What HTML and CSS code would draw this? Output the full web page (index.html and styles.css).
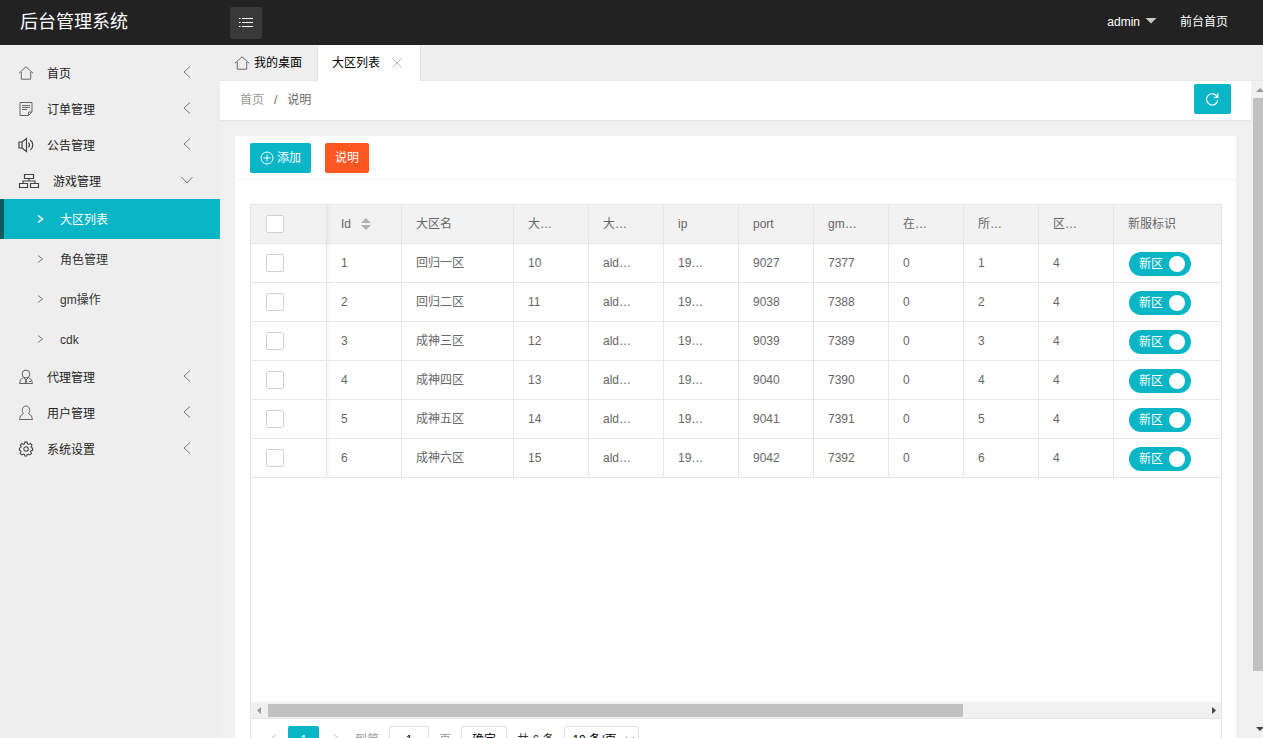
FILE: index.html
```html
<!DOCTYPE html>
<html lang="zh-CN">
<head>
<meta charset="utf-8">
<title>后台管理系统</title>
<link rel="stylesheet" href="styles.css">
</head>
<body>
<svg class="defs" width="0" height="0" aria-hidden="true">
  <symbol id="home" viewBox="0 0 16 16"><path d="M1 8.200 8 1.800l7 6.400M3.300 7v7.200h9.400V7"/></symbol>
  <symbol id="left" viewBox="0 0 16 16"><path d="M11 2.500 5 8l6 5.500"/></symbol>
  <symbol id="right" viewBox="0 0 16 16"><path d="m6 4.500 4.500 3.500L6 11.500"/></symbol>
  <symbol id="down" viewBox="0 0 16 16"><path d="M2.500 5 8 11l5.500-6"/></symbol>
</svg>
<header class="header">
  <div class="logo">后台管理系统</div>
  <button class="toggle" type="button" aria-label="菜单">
    <svg width="16" height="12" viewBox="0 0 16 12"><path d="M4 1.500h11M4 5.500h11M4 9.500h11M1 1.500h1.500M1 5.500h1.500M1 9.500h1.500"/></svg>
  </button>
  <nav class="account">
    <a href="#">admin<i class="caret"></i></a>
    <a href="#">前台首页</a>
  </nav>
</header>
<div class="layout">
  <nav class="side">
    <a class="item" href="#"><svg class="ico"><use href="#home"/></svg><span>首页</span><svg class="arrow"><use href="#left"/></svg></a>
    <a class="item" href="#"><svg class="ico" viewBox="0 0 16 16"><path d="M2 1.500h12v9.500l-3.500 3.500H2zM14 11h-3.500v3.500M4 4.500h8M4 6.500h8M4 8.500h5"/></svg><span>订单管理</span><svg class="arrow"><use href="#left"/></svg></a>
    <a class="item" href="#"><svg class="ico strong" viewBox="0 0 16 16"><path d="M1 5h3v6H1zM4 5l4.500-3.500v13L4 11M10.500 5.500q2 2.500 0 5M12.200 3c3.500 2.500 3.500 7.500 0 10"/></svg><span>公告管理</span><svg class="arrow"><use href="#left"/></svg></a>
    <a class="item" href="#"><svg class="ico wide strong" viewBox="0 0 22 16"><path d="M6.500 1.500h9v4h-9zM1.500 10.500h8v4h-8zM12.500 10.500h8v4h-8zM11 5.500V8M5 10.500V8h12v2.500"/></svg><span>游戏管理</span><svg class="arrow"><use href="#down"/></svg></a>
    <a class="sub active" href="#"><svg class="chev"><use href="#right"/></svg><span>大区列表</span></a>
    <a class="sub" href="#"><svg class="chev"><use href="#right"/></svg><span>角色管理</span></a>
    <a class="sub" href="#"><svg class="chev"><use href="#right"/></svg><span>gm操作</span></a>
    <a class="sub" href="#"><svg class="chev"><use href="#right"/></svg><span>cdk</span></a>
    <a class="item" href="#"><svg class="ico" viewBox="0 0 16 16"><ellipse cx="8" cy="5" rx="3.800" ry="4"/><path d="M5.500 8.500Q1.500 10 1.500 14.500h13Q14.500 10 10.500 8.500M6 9l2 2 2-2M8 11l-1 3.500M8 11l1 3.500M11 12.500h2"/></svg><span>代理管理</span><svg class="arrow"><use href="#left"/></svg></a>
    <a class="item" href="#"><svg class="ico" viewBox="0 0 16 16"><path d="M5.500 8.500C3.500 7 3.800 1 8 1s4.500 6 2.500 7.500Q14.500 10 14.500 14.500h-13Q1.500 10 5.500 8.500"/></svg><span>用户管理</span><svg class="arrow"><use href="#left"/></svg></a>
    <a class="item" href="#"><svg class="ico strong" viewBox="-1 -.5 18 18"><path d="m6.700.8h2.600l.5 2 1.300.6 1.900-1.200 1.800 1.900-1.200 1.800.5 1.200 1.400.3v2.600l-1.700.4-.6 1.300 1 1.700-1.800 1.800-1.800-1-1.300.6-.5 1.500H6.700l-.5-1.700-1.200-.5-1.800 1-1.800-1.800 1-1.800-.6-1.200L.6 10V7.400L2 7l.6-1.300L1.600 4l1.800-1.800 1.700 1.100 1.200-.5z"/><circle cx="8" cy="8.500" r="2.500"/></svg><span>系统设置</span><svg class="arrow"><use href="#left"/></svg></a>
  </nav>
  <main class="main">
    <div class="tabs">
      <a class="tab" href="#"><svg class="ico"><use href="#home"/></svg>我的桌面</a>
      <a class="tab current" href="#">大区列表<svg class="close" viewBox="0 0 10 10"><path d="m.7.7 8.600 8.600M9.300.7.7 9.300"/></svg></a>
    </div>
    <div class="frame">
      <div class="page">
        <div class="crumbs">
          <a href="#">首页</a><span class="slash">/</span><span>说明</span>
          <button class="btn refresh" type="button" aria-label="刷新"><svg width="15" height="14" viewBox="0 0 15 14"><path d="M12.300 5A5.600 5.600 0 1 0 12.800 7.800M12.800 1.300v4H9"/></svg></button>
        </div>
        <section class="card">
          <div class="tools">
            <button class="btn" type="button"><svg width="14" height="14" viewBox="0 0 14 14"><circle cx="7" cy="7" r="6"/><path d="M7 3.500v7M3.500 7h7"/></svg>添加</button>
            <button class="btn warm" type="button">说明</button>
          </div>
          <div class="grid">
            <div class="view">
              <table>
                <colgroup><col class="c-check"><col class="c-std"><col class="c-name"><col class="c-std"><col class="c-std"><col class="c-std"><col class="c-std"><col class="c-std"><col class="c-std"><col class="c-std"><col class="c-std"><col></colgroup>
                <thead><tr><th><input class="check" type="checkbox" aria-label="全选"></th><th><span class="sort">Id<svg width="10" height="12" viewBox="0 0 10 12"><path d="M0 5 5 0l5 5zM0 7l5 5 5-5z"/></svg></span></th><th>大区名</th><th>大…</th><th>大…</th><th>ip</th><th>port</th><th>gm…</th><th>在…</th><th>所…</th><th>区…</th><th>新服标识</th></tr></thead>
                <tbody>
                  <tr><td><input class="check" type="checkbox" aria-label="选择 1"></td><td>1</td><td>回归一区</td><td>10</td><td>ald…</td><td>19…</td><td>9027</td><td>7377</td><td>0</td><td>1</td><td>4</td><td><label class="switch">新区<input type="checkbox" checked></label></td></tr>
                  <tr><td><input class="check" type="checkbox" aria-label="选择 2"></td><td>2</td><td>回归二区</td><td>11</td><td>ald…</td><td>19…</td><td>9038</td><td>7388</td><td>0</td><td>2</td><td>4</td><td><label class="switch">新区<input type="checkbox" checked></label></td></tr>
                  <tr><td><input class="check" type="checkbox" aria-label="选择 3"></td><td>3</td><td>成神三区</td><td>12</td><td>ald…</td><td>19…</td><td>9039</td><td>7389</td><td>0</td><td>3</td><td>4</td><td><label class="switch">新区<input type="checkbox" checked></label></td></tr>
                  <tr><td><input class="check" type="checkbox" aria-label="选择 4"></td><td>4</td><td>成神四区</td><td>13</td><td>ald…</td><td>19…</td><td>9040</td><td>7390</td><td>0</td><td>4</td><td>4</td><td><label class="switch">新区<input type="checkbox" checked></label></td></tr>
                  <tr><td><input class="check" type="checkbox" aria-label="选择 5"></td><td>5</td><td>成神五区</td><td>14</td><td>ald…</td><td>19…</td><td>9041</td><td>7391</td><td>0</td><td>5</td><td>4</td><td><label class="switch">新区<input type="checkbox" checked></label></td></tr>
                  <tr><td><input class="check" type="checkbox" aria-label="选择 6"></td><td>6</td><td>成神六区</td><td>15</td><td>ald…</td><td>19…</td><td>9042</td><td>7392</td><td>0</td><td>6</td><td>4</td><td><label class="switch">新区<input type="checkbox" checked></label></td></tr>
                </tbody>
              </table>
            </div>
            <div class="hbar"><svg class="dim" viewBox="0 0 17 17"><path d="M10 5v7L6 8.500z"/></svg><div class="htrack"><div class="hthumb"></div></div><svg viewBox="0 0 17 17"><path d="M8 5v7l4-3.500z"/></svg></div>
            <div class="pager">
              <a class="step" href="#" aria-label="上一页"><svg><use href="#left"/></svg></a>
              <a class="num" href="#">1</a>
              <a class="step next" href="#" aria-label="下一页"><svg viewBox="0 0 16 16"><path d="m5 2.500 6 5.500-6 5.500"/></svg></a>
              <label class="jump">到第<input type="text" value="1">页</label>
              <button class="ok" type="button">确定</button>
              <span class="total">共 6 条</span>
              <select aria-label="每页条数"><option>10 条/页</option></select>
            </div>
          </div>
        </section>
      </div>
      <div class="vbar"><svg class="dim" viewBox="0 0 12 17"><path d="M5 11h8L9 7z"/></svg><div class="vtrack"><div class="vthumb"></div></div><svg viewBox="0 0 12 17"><path d="M5 6h8l-4 4z"/></svg></div>
    </div>
  </main>
</div>
</body>
</html>
```
FILE: styles.css
```css
* { box-sizing: border-box; }
body {
  margin: 0;
  height: 100vh;
  display: flex;
  flex-direction: column;
  overflow: hidden;
  background: #f0f0f0;
  color: #666;
  font: 12px/20px "Liberation Sans", "Noto Sans CJK SC", sans-serif;
}
a { color: inherit; text-decoration: none; }
button, input, select { font: inherit; margin: 0; }
svg { fill: none; stroke: currentColor; flex: none; }
.defs { position: absolute; }

.header { display: flex; align-items: center; height: 45px; flex: none; background: #222; color: #fff; }
.logo { width: 230px; padding-left: 20px; font-size: 18px; line-height: 44px; height: 45px; }
.toggle { display: grid; place-items: center; width: 32px; height: 32px; padding: 0; border: 0; border-radius: 2px; background: #393939; color: #fff; }
.account { display: flex; gap: 23px; margin-left: auto; padding: 0 35px 2px 0; }
.account a { display: flex; gap: 5px; }
.caret { margin-top: 6px; width: 12px; height: 6px; background: #c8c8c8; clip-path: polygon(0 0, 100% 0, 50% 100%); }

.layout { display: flex; flex: 1; min-height: 0; }
.side { width: 220px; flex: none; padding-top: 10px; background: #eee; color: #222; }
.item { display: flex; align-items: center; height: 36px; padding: 0 25px 0 18px; gap: 13px; }
.side span { padding-top: 2px; }
.ico { width: 16px; height: 16px; color: #666; }
.ico.wide { width: 22px; }
.ico.strong { color: #444; stroke-width: 1.2; }
.arrow { width: 16px; height: 16px; margin: 0 0 2px auto; color: #777; }
.sub { display: flex; align-items: center; height: 40px; padding-left: 28px; gap: 12px; border-left: 4px solid transparent; color: #333; }
.chev { width: 16px; height: 16px; color: #777; }
.sub.active { background: #0ab5c6; border-color: #0b5c5c; color: #fff; }
.sub.active .chev { color: #fff; stroke-width: 1.5; }

.main { display: flex; flex-direction: column; flex: 1; min-width: 0; }
.tabs { display: flex; height: 36px; flex: none; background: #eee; border-bottom: 1px solid #e6e6e6; color: #000; }
.tab { display: flex; align-items: center; gap: 4px; height: 36px; padding: 0 15px 1px 14px; border-right: 1px solid #e2e2e2; }
.tab.current { background: #fff; padding-right: 18px; gap: 12px; }
.close { width: 10px; height: 10px; color: #bbb; }

.frame { display: flex; flex: 1; min-height: 0; }
.page { flex: 1; min-width: 0; overflow: hidden; }
.crumbs { display: flex; align-items: center; height: 40px; padding: 0 20px 3px; background: #fff; border-bottom: 1px solid #e5e5e5; }
.crumbs a, .crumbs span { padding-top: 2px; }
.crumbs a { color: #999; }
.crumbs .slash { padding: 2px 10px 0; }
.btn { display: flex; align-items: center; gap: 3px; height: 30px; padding: 0 10px; border: 0; border-radius: 2px; background: #0ab5c6; color: #fff; }
.btn.warm { background: #ff5722; }
.btn.refresh { margin-left: auto; padding: 0 11px; }
.refresh svg { stroke-width: 1.2; }
.card { margin: 15px 15px 0; background: #fff; }
.tools { display: flex; gap: 14px; padding: 7px 15px 6px; border-bottom: 1px solid #f6f6f6; }
.grid { margin: 24px 14px 0 15px; border: 1px solid #e6e6e6; }
.view { height: calc(100vh - 241px); min-height: 280px; overflow: hidden; }

table { width: 100%; table-layout: fixed; border-collapse: separate; border-spacing: 0; }
.c-check { width: 76px; }
.c-std { width: 75px; }
.c-name { width: 112px; }
th, td { height: 39px; padding: 0 0 0 14px; border: solid #e6e6e6; border-width: 0 1px 1px 0; text-align: left; font-weight: 400; white-space: nowrap; }
th { background: #f2f2f2; }
th:last-child, td:last-child { border-right: 0; }
th:first-child, td:first-child, td:last-child { padding-left: 15px; }
th:nth-child(2), td:nth-child(2) { box-shadow: inset 6px 0 6px -6px rgba(0, 0, 0, .08); }
.check { display: block; appearance: none; width: 18px; height: 18px; border: 1px solid #d2d2d2; border-radius: 2px; background: #fff; }
.sort { display: flex; align-items: center; gap: 10px; }
.sort svg { fill: #b2b2b2; stroke: none; }
.switch { display: flex; align-items: center; justify-content: space-between; width: 62px; height: 24px; margin-top: 2px; padding: 0 6px 0 10px; border-radius: 12px; background: #0ab5c6; color: #fff; }
.switch input { appearance: none; width: 16px; height: 16px; border-radius: 50%; background: #fff; }

.hbar { display: flex; height: 17px; background: #f0f0f0; border-bottom: 1px solid #e6e6e6; }
.hbar svg { width: 17px; height: 17px; }
.hbar svg, .vbar svg { fill: #444; stroke: none; }
.hbar .dim, .vbar .dim { fill: #999; }
.htrack { flex: 1; padding: 2px 0 1px; }
.hthumb { width: 74.3%; height: 13px; background: #c1c1c1; }
.vbar { display: flex; flex-direction: column; width: 12px; background: #f0f0f0; }
.vbar svg { width: 12px; height: 17px; }
.vtrack { flex: 1; padding-left: 2px; }
.vthumb { height: 92%; background: #c1c1c1; }

.pager { display: flex; align-items: center; padding: 7px 6px; color: #333; }
.step { display: grid; place-items: center; width: 31px; height: 26px; color: #bbb; }
.step svg { width: 16px; height: 16px; }
.step.next { width: 36px; }
.num { width: 31px; line-height: 28px; border-radius: 2px; background: #0ab5c6; color: #fff; text-align: center; }
.jump { display: flex; align-items: center; gap: 10px; color: #999; }
.jump input { width: 40px; height: 28px; padding: 0; border: 1px solid #e2e2e2; border-radius: 2px; text-align: center; color: #000; }
.ok { height: 28px; margin: 0 10px; padding: 0 10px; border: 1px solid #e2e2e2; border-radius: 2px; background: #fff; color: #000; }
.pager select { width: 75px; height: 28px; margin-left: 10px; padding: 0 3px; border: 1px solid #e2e2e2; border-radius: 2px; background: #fff; color: #000; }
```
